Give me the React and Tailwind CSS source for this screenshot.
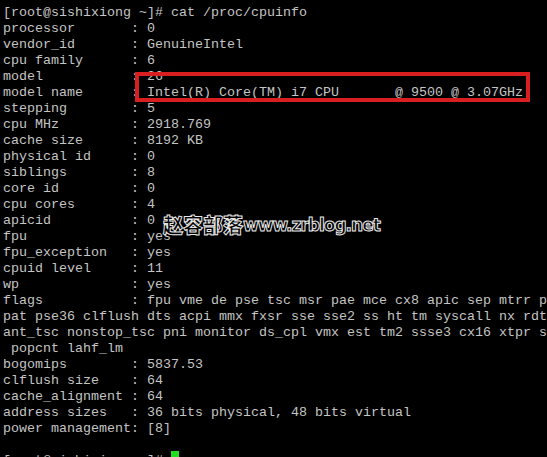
const lines = [
  "[root@sishixiong ~]# cat /proc/cpuinfo",
  "processor       : 0",
  "vendor_id       : GenuineIntel",
  "cpu family      : 6",
  "model           : 26",
  "model name      : Intel(R) Core(TM) i7 CPU       @ 9500 @ 3.07GHz",
  "stepping        : 5",
  "cpu MHz         : 2918.769",
  "cache size      : 8192 KB",
  "physical id     : 0",
  "siblings        : 8",
  "core id         : 0",
  "cpu cores       : 4",
  "apicid          : 0",
  "fpu             : yes",
  "fpu_exception   : yes",
  "cpuid level     : 11",
  "wp              : yes",
  "flags           : fpu vme de pse tsc msr pae mce cx8 apic sep mtrr pge mca cmov",
  "pat pse36 clflush dts acpi mmx fxsr sse sse2 ss ht tm syscall nx rdtscp lm const",
  "ant_tsc nonstop_tsc pni monitor ds_cpl vmx est tm2 ssse3 cx16 xtpr sse4_1 sse4_2",
  " popcnt lahf_lm",
  "bogomips        : 5837.53",
  "clflush size    : 64",
  "cache_alignment : 64",
  "address sizes   : 36 bits physical, 48 bits virtual",
  "power management: [8]",
  "",
];

export default function App() {
  return (
    <div className="relative w-[547px] h-[457px] overflow-hidden bg-black pt-[5px] pl-[3px] font-['Liberation_Mono','Courier_New',monospace] text-[13.333px] leading-4 text-[#c4c4c4]">
      {lines.map((l, i) => (
        <div key={i} className="whitespace-pre h-4">
          {l}
        </div>
      ))}
      <div className="whitespace-pre h-4 flex">
        <span>[root@sishixiong ~]# </span>
        <span className="inline-block w-2 h-4 -translate-y-[2px] bg-[#22dd22]"></span>
      </div>

      {/* highlight box */}
      <div className="absolute left-[135px] top-[72px] w-[395px] h-[30px] border-4 border-[#d81e1e]"></div>

      {/* watermark */}
      <div className="absolute left-[163px] top-[213px] flex items-center whitespace-nowrap text-black [-webkit-text-stroke:1px_#e8e8e8]">
        <span className="font-['Noto_Sans_CJK_SC',sans-serif] font-black text-[20px] leading-6">赵容部落</span>
        <span className="font-['DejaVu_Sans',sans-serif] font-bold text-[17px] leading-6 tracking-[-1px]">www.zrblog.net</span>
      </div>
    </div>
  );
}
